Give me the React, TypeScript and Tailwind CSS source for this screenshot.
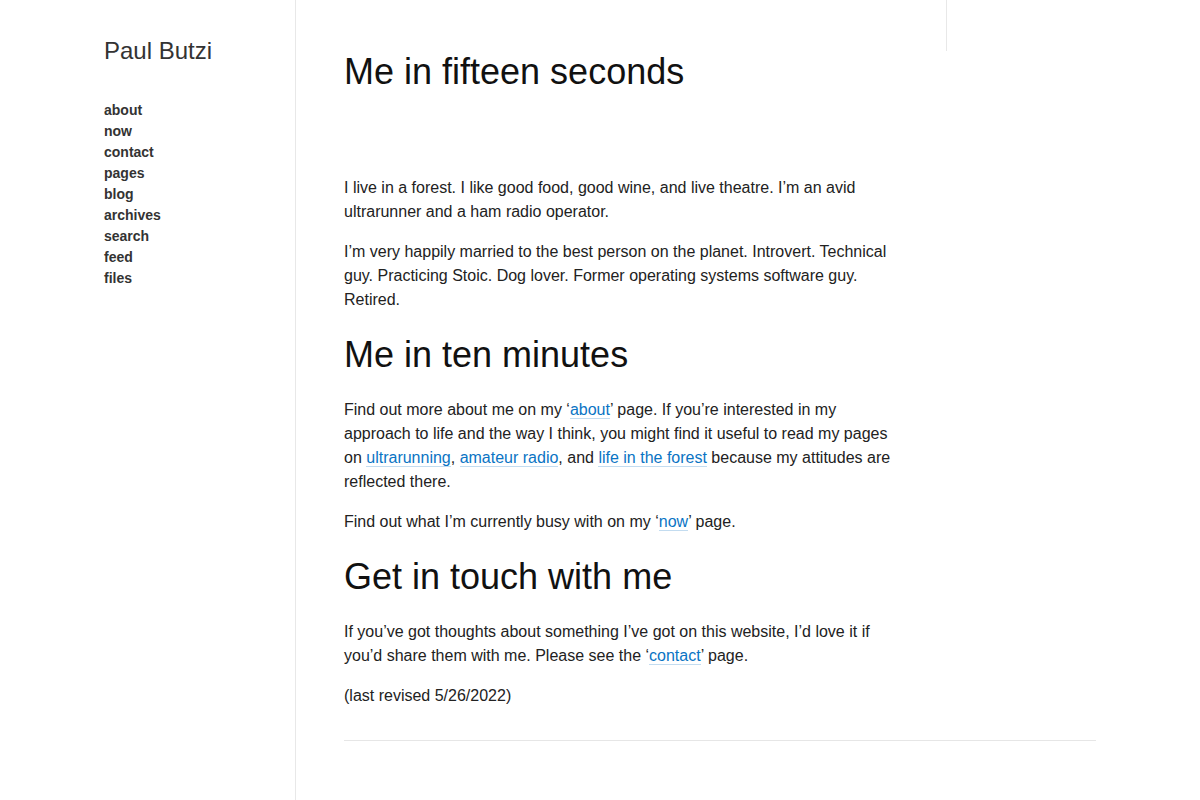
export default function App() {
  const nav = ["about", "now", "contact", "pages", "blog", "archives", "search", "feed", "files"];
  const A = ({ children }: { children: React.ReactNode }) => (
    <a href="#" className="text-[#0a74c4] border-b border-[#c3dcf0] no-underline">
      {children}
    </a>
  );
  return (
    <div
      className="flex min-h-[800px] bg-white text-[#222]"
      style={{ fontFamily: '"Liberation Sans", Arial, sans-serif' }}
    >
      <aside className="w-[296px] shrink-0 border-r border-[#e8e8e8] pl-[104px] pt-[36px]">
        <div className="text-[24px] leading-[30px] text-[#333]">Paul Butzi</div>
        <ul className="mt-[34px] flex flex-col">
          {nav.map((n) => (
            <li key={n} className="text-[14px] leading-[21px] font-bold text-[#333]">
              {n}
            </li>
          ))}
        </ul>
      </aside>
      <main className="flex-1 min-w-0">
        <div className="flex">
          <article className="w-[650px] shrink-0 px-[48px] pt-[50px] text-[16px] leading-[24px]">
            <h1 className="text-[36px] leading-[44px] text-[#111] mb-[82px]">Me in fifteen seconds</h1>
            <p className="mb-[16px]">
              I live in a forest. I like good food, good wine, and live theatre. I’m an avid ultrarunner and a ham
              radio operator.
            </p>
            <p className="mb-[16px]">
              I’m very happily married to the best person on the planet. Introvert. Technical guy. Practicing Stoic.
              Dog lover. Former operating systems software guy. Retired.
            </p>
            <h2 className="text-[36px] leading-[44px] text-[#111] mt-[21px] mb-[21px]">Me in ten minutes</h2>
            <p className="mb-[16px]">
              Find out more about me on my ‘<A>about</A>’ page. If you’re interested in my approach to life and the
              way I think, you might find it useful to read my pages on <A>ultrarunning</A>, <A>amateur radio</A>, and{" "}
              <A>life in the forest</A> because my attitudes are reflected there.
            </p>
            <p className="mb-[16px]">
              Find out what I’m currently busy with on my ‘<A>now</A>’ page.
            </p>
            <h2 className="text-[36px] leading-[44px] text-[#111] mt-[21px] mb-[21px]">Get in touch with me</h2>
            <p className="mb-[16px]">
              If you’ve got thoughts about something I’ve got on this website, I’d love it if you’d share them with me.
              Please see the ‘<A>contact</A>’ page.
            </p>
            <p>(last revised 5/26/2022)</p>
          </article>
          <div className="h-[51px] border-l border-[#e8e8e8] flex-1" />
        </div>
        <div className="ml-[48px] mr-[104px] mt-[32px] border-t border-[#e6e6e6]" />
      </main>
    </div>
  );
}
